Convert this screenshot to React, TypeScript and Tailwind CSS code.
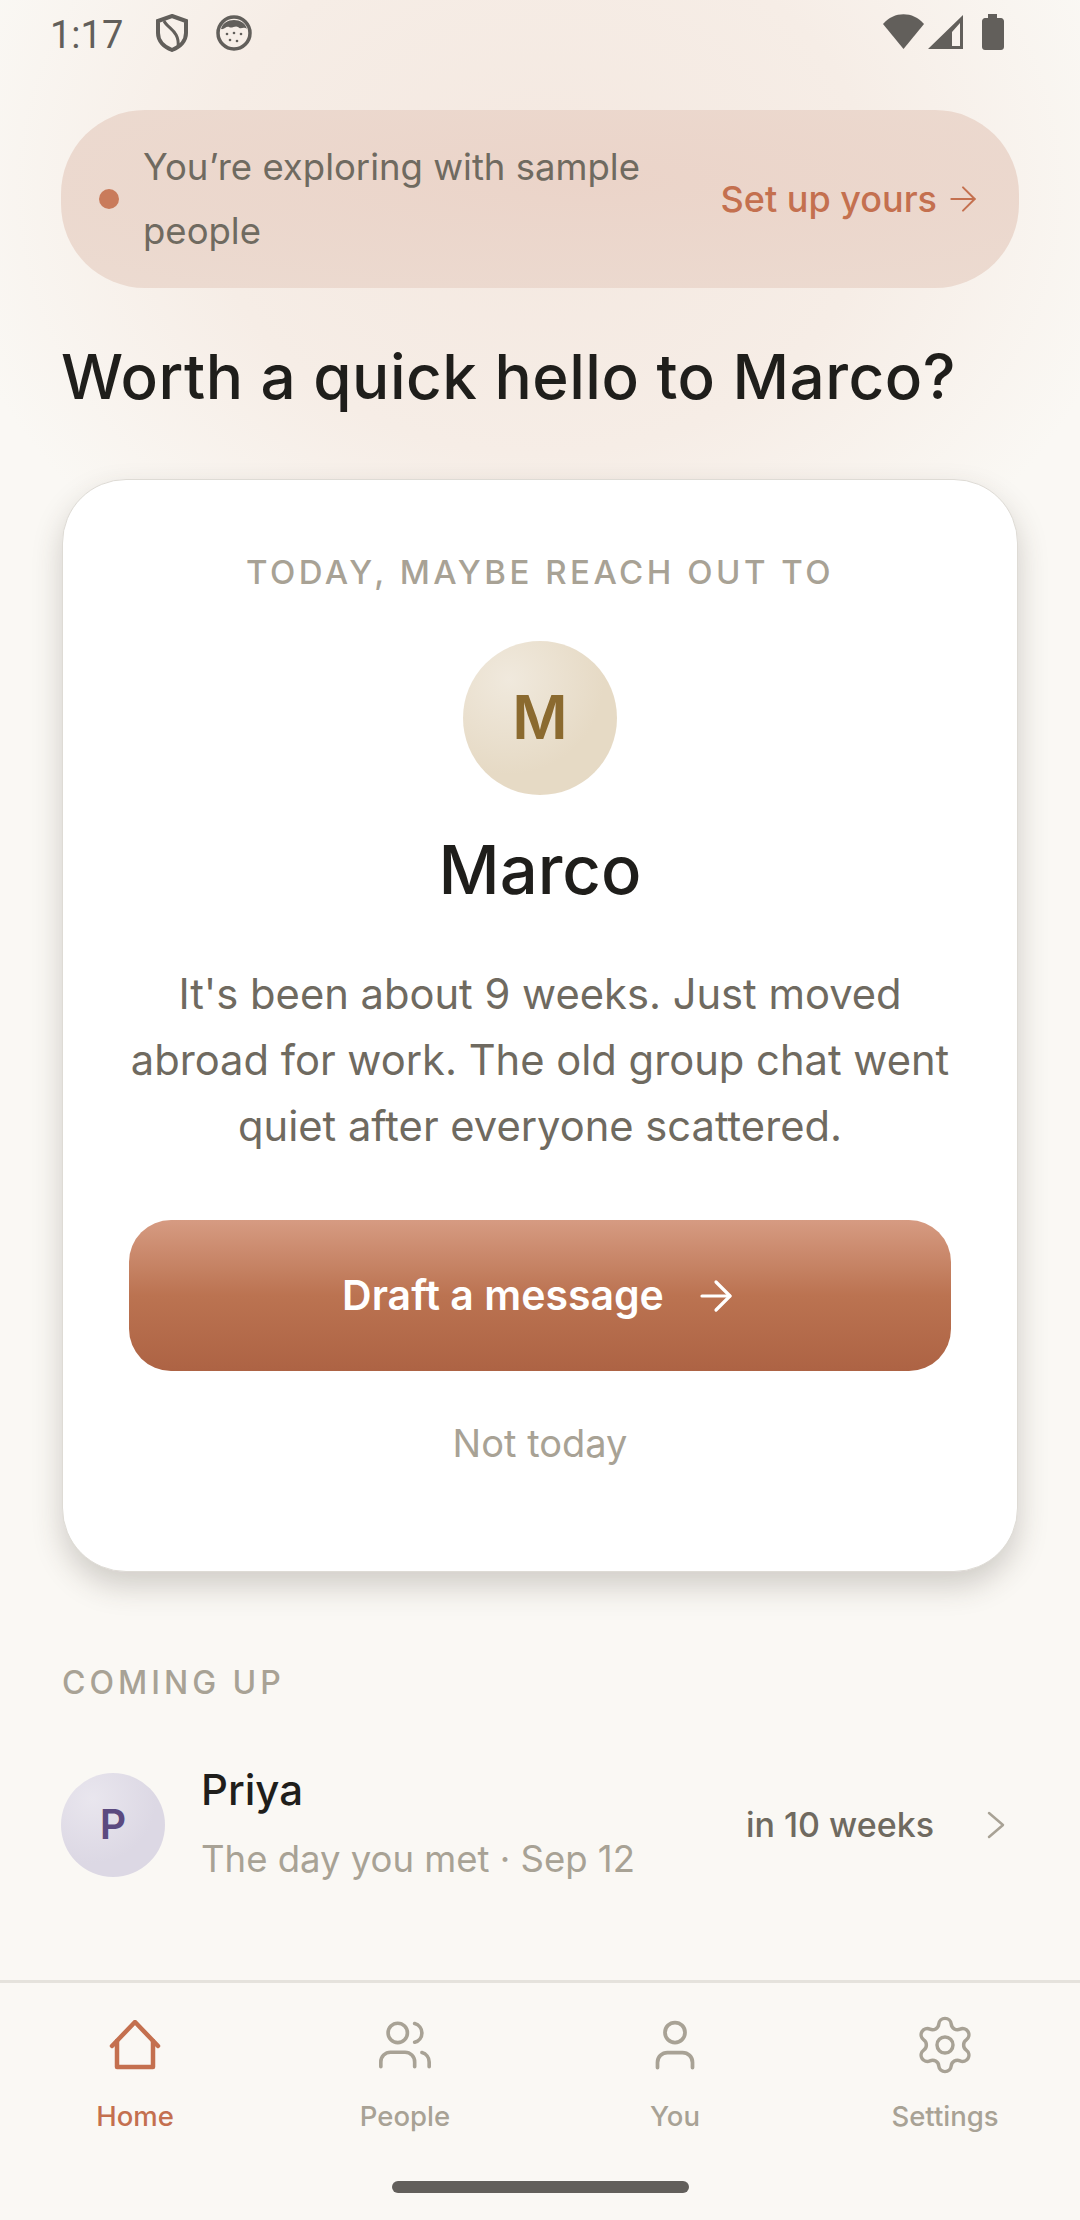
import { ArrowRight, Settings, User, Users } from "lucide-react";

const StatusBar = () => (
  <div className="h-[70px] pl-[50px] pr-[76px] flex items-center justify-between text-[#625f5b] font-['Roboto',sans-serif]">
    <div className="flex items-center">
      <span className="text-[38px] leading-[70px] w-[106px]">1:17</span>
      <svg className="-mt-[4px]" width="32" height="38" viewBox="0 0 32 38" fill="none" stroke="#625f5b" strokeWidth="4">
        <path d="M16 2 L30 7 V19 C30 27 24 33 16 36 C8 33 2 27 2 19 V7 Z" />
        <path d="M8 7 C12 15 24 17 22 33" strokeWidth="3" />
      </svg>
      <svg className="ml-[28px] -mt-[4px]" width="36" height="36" viewBox="0 0 36 36">
        <circle cx="18" cy="18" r="16" fill="none" stroke="#625f5b" strokeWidth="3.5" />
        <path d="M5 14 C8 2 28 2 31 14 C27 11 25 15 22 12 C19 10 16 14 13 12 C10 11 8 15 5 14 Z" fill="#625f5b" />
        <circle cx="11" cy="19" r="1.3" fill="#625f5b" />
        <circle cx="18" cy="18" r="1.3" fill="#625f5b" />
        <circle cx="25" cy="19" r="1.3" fill="#625f5b" />
        <circle cx="14" cy="25" r="1.3" fill="#625f5b" />
        <circle cx="21" cy="26" r="1.3" fill="#625f5b" />
      </svg>
    </div>
    <div className="flex items-center -mt-[6px]">
      <svg width="41" height="36" viewBox="0 0 41 36">
        <path d="M0 10 C11 -3 30 -3 41 10 L20.500 35 Z" fill="#625f5b" />
      </svg>
      <svg className="ml-[4px]" width="35" height="36" viewBox="0 0 35 36" fill="#625f5b">
        <path fillRule="evenodd" d="M35 1 V35 H0 Z M32 9 L24 18 V32 H32 Z" />
      </svg>
      <svg className="ml-[19px]" width="22" height="36" viewBox="0 0 22 36" fill="#625f5b">
        <path d="M6 0 H15 V4 H19 C20.500 4 22 5.500 22 7 V33 C22 35 20.500 36 19 36 H3 C1.500 36 0 35 0 33 V7 C0 5.500 1.500 4 3 4 H6 Z" />
      </svg>
    </div>
  </div>
);

const SampleBanner = () => (
  <div className="mt-[40px] mx-[61px] h-[178px] rounded-[84px] bg-[radial-gradient(ellipse_at_55%_40%,#ebd4c9_0%,#ecdbd1_100%)] pl-[38px] pr-[36px] flex items-center">
    <div className="w-[20px] h-[20px] rounded-full bg-[#c97b5b] shrink-0" />
    <p className="ml-[24px] w-[530px] text-[36.500px] leading-[64px] text-[#6f6a60] -mt-[1px]">You’re exploring with sample people</p>
    <div className="ml-auto flex items-center gap-[6px] text-[#c4704f] text-[36px] font-medium">
      <span>Set up yours</span>
      <ArrowRight size={40} strokeWidth={1.2} />
    </div>
  </div>
);

const SuggestionCard = () => (
  <div className="mt-[63px] mx-[62px] h-[1093px] rounded-[64px] bg-white border border-[#dedbd5] shadow-[0_14px_30px_rgba(60,50,40,0.22)] flex flex-col items-center pt-[72px]">
    <div className="text-[33px] leading-[40px] font-medium tracking-[3.500px] text-[#a8a295]">TODAY, MAYBE REACH OUT TO</div>
    <div className="mt-[49px] w-[154px] h-[154px] rounded-full bg-[radial-gradient(circle_at_30%_25%,#f0e9dd_0%,#e6dac5_60%)] flex items-center justify-center">
      <span className="text-[60px] font-semibold text-[#8b6a2f] font-['Inter',sans-serif] -mt-[2px]">M</span>
    </div>
    <h2 className="mt-[35px] text-[67px] leading-[80px] font-[550] text-[#1f1e1b]">Marco</h2>
    <p className="mt-[51px] w-[840px] text-center text-[41.700px] leading-[66px] text-[#6f6a60]">
      It's been about 9 weeks. Just moved abroad for work. The old group chat went quiet after everyone scattered.
    </p>
    <button className="mt-[61px] w-[822px] h-[151px] shrink-0 rounded-[42px] bg-gradient-to-b from-[#d69b82] via-[#bb7351] to-[#ad6344] flex items-center justify-center gap-[28px] pl-[2px] text-white text-[41px] font-semibold">
      <span>Draft a message</span>
      <ArrowRight size={48} strokeWidth={1.6} />
    </button>
    <div className="mt-[47px] text-[38px] leading-[50px] text-[#a8a295]">Not today</div>
  </div>
);

const UpcomingRow = () => (
  <div className="mt-[63px] mx-[61px] flex items-center">
    <div className="w-[104px] h-[104px] rounded-full bg-[radial-gradient(circle_at_30%_25%,#e9e6ee_0%,#dcd8e4_60%)] flex items-center justify-center">
      <span className="text-[41px] font-semibold text-[#5b4a80] font-['Inter',sans-serif]">P</span>
    </div>
    <div className="ml-[36px]">
      <div className="text-[42px] leading-[50px] font-medium text-[#1f1e1b] -mt-[1px]">Priya</div>
      <div className="mt-[19px] text-[36.500px] leading-[50px] text-[#a8a295]">The day you met · Sep 12</div>
    </div>
    <div className="ml-auto text-[34px] font-medium text-[#6f6a60] -mt-[1px]">in 10 weeks</div>
    <svg className="ml-[52px] mr-[13px]" width="20" height="28" viewBox="0 0 20 28" fill="none" stroke="#a8a295" strokeWidth="2.500" strokeLinecap="round" strokeLinejoin="round">
      <path d="M3 2 L17 14 L3 26" />
    </svg>
  </div>
);

const HomeIcon = () => (
  <svg width="52" height="50" viewBox="0 0 52 50" fill="none" stroke="#c4704f" strokeWidth="4.500" strokeLinejoin="round" strokeLinecap="round">
    <path d="M3 26 L26 2 L49 26" />
    <path d="M8 21 V47 H44 V21" />
  </svg>
);

const NavItem = ({ label, active, icon }: { label: string; active?: boolean; icon: React.ReactNode }) => (
  <div className="flex flex-col items-center">
    <div className="h-[50px] flex items-center justify-center">{icon}</div>
    <div className={`mt-[28px] text-[27.500px] leading-[36px] font-medium ${active ? "text-[#c4704f]" : "text-[#a8a295]"}`}>{label}</div>
  </div>
);

const BottomNav = () => (
  <div className="mt-auto h-[240px] bg-[#faf8f4] border-t-[3px] border-[#e5e2dc] flex flex-col">
    <div className="grid grid-cols-4 pt-[37px]">
      <NavItem label="Home" active icon={<HomeIcon />} />
      <NavItem label="People" icon={<Users size={58} strokeWidth={1.5} color="#a8a295" />} />
      <NavItem label="You" icon={<User size={60} strokeWidth={1.5} color="#a8a295" />} />
      <NavItem label="Settings" icon={<Settings size={64} strokeWidth={1.3} color="#a8a295" />} />
    </div>
    <div className="mt-[47px] mx-auto w-[297px] h-[12px] rounded-full bg-[#625f5b]" />
  </div>
);

export default function App() {
  return (
    <div className="w-[1080px] h-[2220px] flex flex-col bg-[#faf8f4] bg-[radial-gradient(ellipse_600px_480px_at_540px_190px,#f4e8e0_0%,#f6ede6_55%,#faf8f4_100%)] font-['Inter',sans-serif] overflow-hidden">
      <StatusBar />
      <SampleBanner />
      <h1 className="mt-[49px] mx-[61px] text-[62px] leading-[80px] tracking-[0.500px] font-[450] text-[#1f1e1b]">Worth a quick hello to Marco?</h1>
      <div className="-mt-[1px]">
        <SuggestionCard />
      </div>
      <div className="mt-[91px] mx-[62px] text-[32px] leading-[40px] font-medium tracking-[4px] text-[#a8a295]">COMING UP</div>
      <UpcomingRow />
      <BottomNav />
    </div>
  );
}
